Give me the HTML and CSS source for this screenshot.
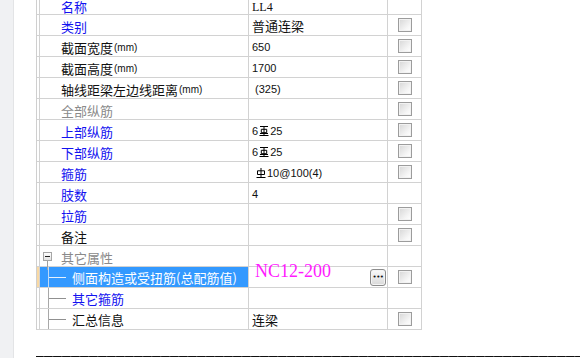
FILE: index.html
```html
<!DOCTYPE html>
<html lang="zh">
<head>
<meta charset="utf-8">
<title>属性编辑</title>
<link rel="stylesheet" href="styles.css">
</head>
<body>
<div class="page">
  <div class="sidebar"></div>
  <div class="main">
    <div class="grid">
      <div class="row first"><div class="gut"></div><div class="name blue">名称</div><div class="val serif">LL4</div><div class="chk"></div></div>
      <div class="row"><div class="gut"></div><div class="name blue">类别</div><div class="val cjk">普通连梁</div><div class="chk"><span class="box"></span></div></div>
      <div class="row"><div class="gut"></div><div class="name">截面宽度<span class="unit">(mm)</span></div><div class="val">650</div><div class="chk"><span class="box"></span></div></div>
      <div class="row"><div class="gut"></div><div class="name">截面高度<span class="unit">(mm)</span></div><div class="val">1700</div><div class="chk"><span class="box"></span></div></div>
      <div class="row"><div class="gut"></div><div class="name">轴线距梁左边线距离<span class="unit">(mm)</span></div><div class="val pad">(325)</div><div class="chk"><span class="box"></span></div></div>
      <div class="row"><div class="gut"></div><div class="name gray">全部纵筋</div><div class="val"></div><div class="chk"><span class="box"></span></div></div>
      <div class="row"><div class="gut"></div><div class="name blue">上部纵筋</div><div class="val">6<svg class="sym" viewBox="0 0 10 12" width="10" height="12"><path d="M1 1.5H9M5 1.5V10.5M2.3 4.3H7.7V7.7H2.3ZM1 8.5H9M0.5 10.5H9.5" fill="none" stroke="#000" stroke-width="1"/></svg>25</div><div class="chk"><span class="box"></span></div></div>
      <div class="row"><div class="gut"></div><div class="name blue">下部纵筋</div><div class="val">6<svg class="sym" viewBox="0 0 10 12" width="10" height="12"><path d="M1 1.5H9M5 1.5V10.5M2.3 4.3H7.7V7.7H2.3ZM1 8.5H9M0.5 10.5H9.5" fill="none" stroke="#000" stroke-width="1"/></svg>25</div><div class="chk"><span class="box"></span></div></div>
      <div class="row"><div class="gut"></div><div class="name blue">箍筋</div><div class="val pad"><svg class="sym" viewBox="0 0 10 12" width="10" height="12"><path d="M5 1V10.5M1.5 3.8H8.5V7.5H1.5ZM0.5 10.5H9.5" fill="none" stroke="#000" stroke-width="1"/></svg>10@100(4)</div><div class="chk"><span class="box"></span></div></div>
      <div class="row"><div class="gut"></div><div class="name blue">肢数</div><div class="val">4</div><div class="chk"></div></div>
      <div class="row"><div class="gut"></div><div class="name blue">拉筋</div><div class="val"></div><div class="chk"><span class="box"></span></div></div>
      <div class="row"><div class="gut"></div><div class="name">备注</div><div class="val"></div><div class="chk"><span class="box"></span></div></div>
      <div class="row"><div class="gut"></div><div class="name gray group"><span class="minus"></span>其它属性</div><div class="val"></div><div class="chk"></div></div>
      <div class="row"><div class="gut sel-gut"></div><div class="name child selected"><span class="twig"><span class="branch"></span></span>侧面构造或受扭筋(总配筋值)</div><div class="val edit"><span class="dots">•••</span></div><div class="chk"><span class="box"></span></div></div>
      <div class="row"><div class="gut"></div><div class="name child blue"><span class="twig"><span class="branch"></span></span>其它箍筋</div><div class="val"></div><div class="chk"></div></div>
      <div class="row"><div class="gut"></div><div class="name child"><span class="twig"><span class="branch"></span></span>汇总信息</div><div class="val cjk">连梁</div><div class="chk"><span class="box"></span></div></div>
      <div class="overlay">NC12-200</div>
    </div>
    <div class="rule"></div>
  </div>
</div>
</body>
</html>
```

FILE: styles.css
```css
* {
  box-sizing: border-box;
}
html, body {
  margin: 0;
  padding: 0;
  background: #ffffff;
  overflow: hidden;
}
.page {
  display: flex;
  width: 580px;
  height: 358px;
}
.sidebar {
  width: 14px;
  background: #f0f1f3;
  border-right: 1px solid #e3e4e6;
  flex: none;
}
.main {
  flex: 1;
  padding-left: 22px;
  display: flex;
  flex-direction: column;
}
.grid {
  position: relative;
  width: 386px;
  border-left: 1px solid #cfcfcf;
  flex: none;
}
.row {
  display: flex;
  height: 21px;
  border-bottom: 1px solid #d2d2d2;
}
.row.first {
  height: 15px;
}
.row.first .name,
.row.first .val {
  padding-top: 0;
  line-height: 14px;
}
.gut {
  width: 3px;
  border-right: 1px solid #d2d2d2;
  flex: none;
}
.sel-gut {
  background: #f9d9a4;
}
.name {
  width: 209px;
  padding-left: 21px;
  padding-top: 4px;
  flex: none;
  border-right: 1px solid #d2d2d2;
  font-family: "Noto Sans CJK SC", "Noto Sans", sans-serif;
  font-size: 13px;
  line-height: 16px;
  color: #111111;
  white-space: nowrap;
  display: flex;
  align-items: center;
}
.blue { color: #1212f0; }
.gray { color: #8a8a8a; }
.unit {
  font-family: "Liberation Sans", sans-serif;
  font-size: 10px;
  margin-left: 1px;
}
.group {
  padding-left: 3px;
}
.minus {
  position: relative;
  width: 9px;
  height: 9px;
  border: 1px solid #a6a6a6;
  background: linear-gradient(#ffffff, #e2e2e2);
  margin-right: 9px;
  margin-top: -3px;
  flex: none;
}
.minus::before {
  content: "";
  position: absolute;
  left: 1px;
  top: 3px;
  width: 5px;
  height: 1px;
  background: #222222;
}
.minus::after {
  content: "";
  position: absolute;
  left: 3px;
  top: 8px;
  width: 1px;
  height: 9px;
  background: #a0a0a0;
}
.child {
  padding-left: 8px;
  padding-top: 0;
  align-items: stretch;
  line-height: 21px;
}
.twig {
  width: 18px;
  border-left: 1px solid #a8a8a8;
  display: flex;
  align-items: center;
  margin-right: 6px;
  flex: none;
}
.branch {
  display: block;
  width: 17px;
  height: 1px;
  background: #909090;
}
.selected {
  background: #3399ff;
  color: #ffffff;
}
.selected .twig { border-left-color: #bcd9f8; }
.selected .branch { background: #e6f1fd; }
.val {
  width: 139px;
  padding-left: 3px;
  padding-top: 2px;
  flex: none;
  border-right: 1px solid #d2d2d2;
  font-family: "Liberation Sans", sans-serif;
  font-size: 11px;
  line-height: 18px;
  color: #111111;
  display: flex;
  align-items: center;
  white-space: nowrap;
}
.val.pad { padding-left: 6px; }
.serif { font-family: "Liberation Serif", serif; font-size: 12px; }
.cjk { font-family: "Noto Sans CJK SC", sans-serif; font-size: 13px; }
.sym { margin: 0 1px 0 1px; flex: none; }
.edit { justify-content: flex-end; padding-top: 0; }
.dots {
  width: 16px;
  height: 17px;
  margin-right: 1px;
  border: 1px solid #8c8c8c;
  border-radius: 3px;
  background: linear-gradient(#fafafa, #d9d9d9);
  font-family: "DejaVu Sans", sans-serif;
  font-size: 7px;
  line-height: 15px;
  text-align: center;
  color: #111111;
  letter-spacing: -0.5px;
  box-shadow: inset 0 0 0 1px #f4f4f4;
}
.chk {
  width: 34px;
  flex: none;
  border-right: 1px solid #d2d2d2;
  display: flex;
  align-items: center;
  justify-content: center;
}
.box {
  width: 14px;
  height: 14px;
  border: 1px solid #9c9c9c;
  background: linear-gradient(135deg, #d6d6d6, #f6f6f6 70%, #ffffff);
  box-shadow: inset 0 0 0 1px #f2f2f2;
  margin-left: 1px;
}
.overlay {
  position: absolute;
  left: 218px;
  top: 261px;
  font-family: "Liberation Serif", serif;
  font-size: 18px;
  line-height: 20px;
  color: #ff1aff;
}
.rule {
  margin-top: 26px;
  height: 1px;
  flex: none;
  background: repeating-linear-gradient(90deg, #111111 0, #111111 7px, #555555 7px, #111111 9px);
}
```
